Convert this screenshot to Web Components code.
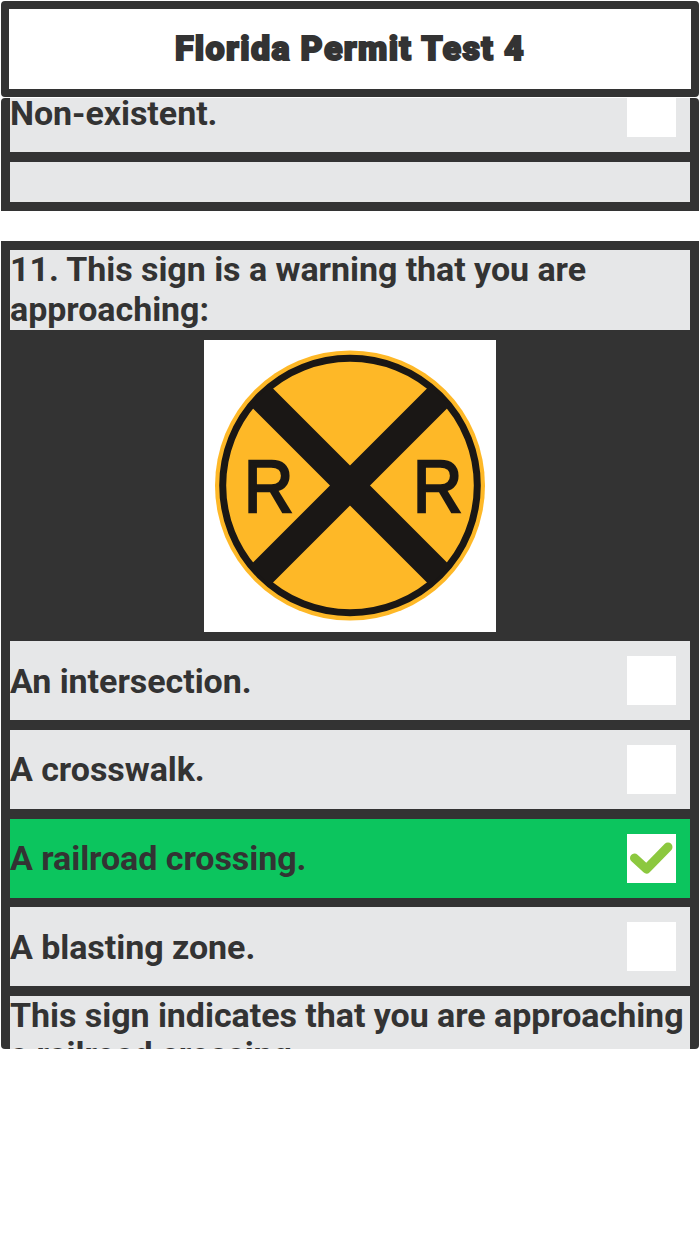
<!DOCTYPE html>
<html>
<head>
<meta charset="utf-8">
<title>Florida Permit Test 4</title>
<style>
    html, body { margin: 0; padding: 0; background: #fff; }
    body { font-family: Roboto, "Liberation Sans", sans-serif; color: #333; }
</style>
</head>
<body>
<quiz-page>
    <quiz-header slot="header">Florida Permit Test 4</quiz-header>
    <quiz-card class="first">
        <answer-row>Non-existent.</answer-row>
        <answer-row empty></answer-row>
    </quiz-card>
    <quiz-card>
        <question-text>11. This sign is a warning that you are approaching:</question-text>
        <rail-sign></rail-sign>
        <answer-row>An intersection.</answer-row>
        <answer-row>A crosswalk.</answer-row>
        <answer-row correct>A railroad crossing.</answer-row>
        <answer-row>A blasting zone.</answer-row>
        <question-text>This sign indicates that you are approaching a railroad crossing.</question-text>
    </quiz-card>
</quiz-page>

<script>
class QuizPage extends HTMLElement {
    constructor() {
        super();
        this.attachShadow({mode: "open"});
        this.shadowRoot.innerHTML = `
            <style>
                :host { display: block; width: 700px; height: 1244px; overflow: hidden; }
                .scroller {
                    height: 951px;
                    margin: 1px 1px 0 1px;
                    border-radius: 4px;
                    overflow: hidden;
                }
                /* list is scrolled, the first card starts above the fold */
                .list {
                    display: flex;
                    flex-direction: column;
                    gap: 29.5px;
                    margin-top: -33.7px;
                }
            </style>
            <slot name="header"></slot>
            <div class="scroller"><div class="list"><slot></slot></div></div>
        `;
    }
}

class QuizHeader extends HTMLElement {
    constructor() {
        super();
        this.attachShadow({mode: "open"});
        this.shadowRoot.innerHTML = `
            <style>
                :host {
                    display: flex;
                    align-items: center;
                    justify-content: center;
                    box-sizing: border-box;
                    height: 95.5px;
                    margin: 1px 1px 0 1px;
                    padding-bottom: 2px;
                    border: 8.5px solid #333;
                    border-radius: 4px;
                    background: #fff;
                    font: 900 34px Roboto, sans-serif;
                    letter-spacing: 1.35px;
                    -webkit-text-stroke: 1.9px #333;
                    color: #333;
                }
            </style>
            <slot></slot>
        `;
    }
}

class QuizCard extends HTMLElement {
    constructor() {
        super();
        this.attachShadow({mode: "open"});
        this.shadowRoot.innerHTML = `
            <style>
                :host {
                    display: flex;
                    flex-direction: column;
                    gap: 9.67px;
                    padding: 9.5px 9px;
                    background: #333;
                }
            </style>
            <slot></slot>
        `;
    }
}

class QuestionText extends HTMLElement {
    constructor() {
        super();
        this.attachShadow({mode: "open"});
        this.shadowRoot.innerHTML = `
            <style>
                :host {
                    display: block;
                    background: #e6e7e8;
                    color: #333;
                    font: 700 34px/39.5px Roboto, sans-serif;
                    letter-spacing: -0.05px;
                    padding-bottom: 1px;
                }
            </style>
            <slot></slot>
        `;
    }
}

class AnswerRow extends HTMLElement {
    constructor() {
        super();
        this.attachShadow({mode: "open"});
        this.shadowRoot.innerHTML = `
            <style>
                :host {
                    display: flex;
                    align-items: center;
                    justify-content: space-between;
                    height: 79px;
                    padding-right: 14.5px;
                    background: #e6e7e8;
                    color: #333;
                    font: 700 34px/40px Roboto, sans-serif;
                    letter-spacing: -0.05px;
                }
                :host([correct]) { background: #0cc55e; }
                :host([empty]) { height: 40px; }
                :host([empty]) .box { display: none; }
                .box { width: 49px; height: 49px; background: #fff; flex: none; }
                svg { display: none; width: 49px; height: 49px; }
                :host([correct]) svg { display: block; }
            </style>
            <span><slot></slot></span>
            <div class="box">
                <svg viewBox="0 0 49 49">
                    <path d="M7.5 24 L19.5 35 L41 13" fill="none" stroke="#8cc83f" stroke-width="9" stroke-linecap="round" stroke-linejoin="round"/>
                </svg>
            </div>
        `;
    }
}

class RailSign extends HTMLElement {
    constructor() {
        super();
        this.attachShadow({mode: "open"});
        this.shadowRoot.innerHTML = `
            <style>
                :host { display: flex; justify-content: center; }
                svg { display: block; width: 291.5px; height: 291.5px; background: #fff; }
                text { font: 400 75px "Liberation Sans", sans-serif; fill: #1a1715; stroke: #1a1715; stroke-width: 2.4px; text-anchor: middle; }
            </style>
            <svg viewBox="0 0 291.5 291.5">
                <circle cx="146" cy="145.5" r="135" fill="#feb827"/>
                <circle cx="146" cy="145.5" r="127.3" fill="#feb827" stroke="#1a1715" stroke-width="7"/>
                <path d="M56 55.5 L236 235.5 M236 55.5 L56 235.5" stroke="#1a1715" stroke-width="28.3"/>
                <text transform="translate(64.7 172.3) scale(.92 1)">R</text>
                <text transform="translate(233.7 172.3) scale(.92 1)">R</text>
            </svg>
        `;
    }
}

customElements.define("quiz-page", QuizPage);
customElements.define("quiz-header", QuizHeader);
customElements.define("quiz-card", QuizCard);
customElements.define("question-text", QuestionText);
customElements.define("answer-row", AnswerRow);
customElements.define("rail-sign", RailSign);
</script>
</body>
</html>
